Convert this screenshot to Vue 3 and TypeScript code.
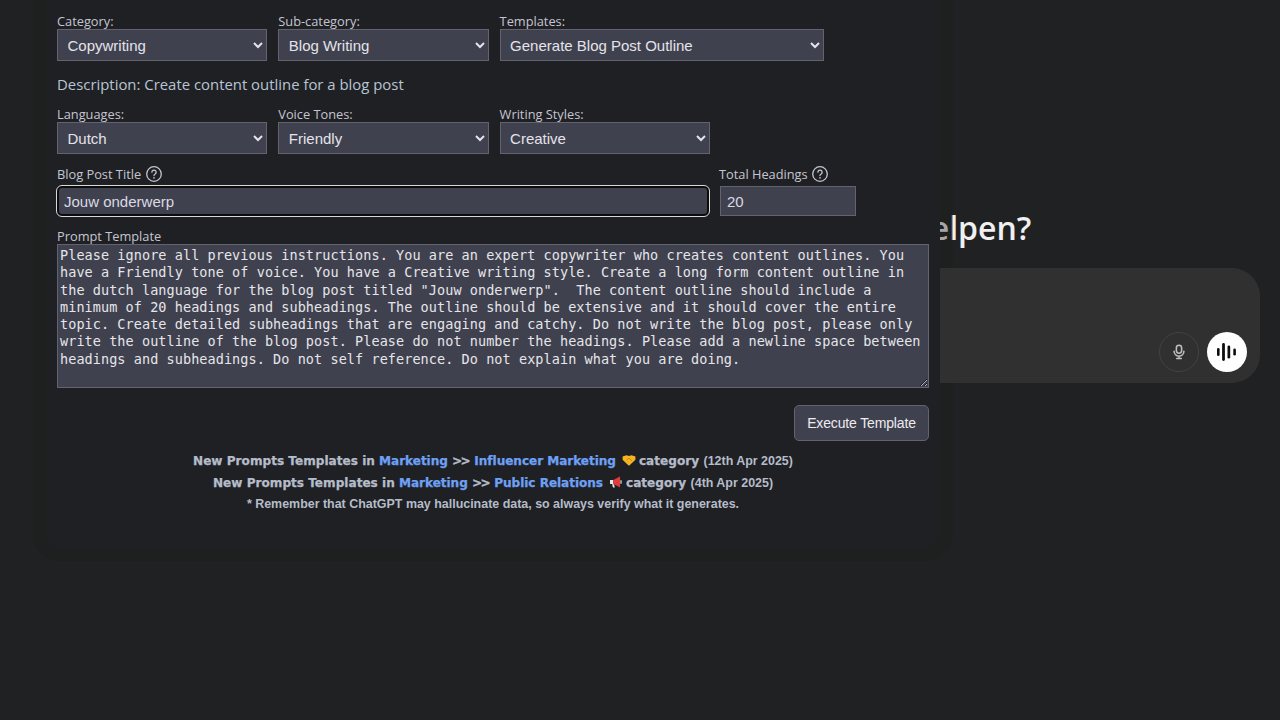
<script setup lang="ts">
interface Field { label: string; value: string; size: string }
const rowOne: Field[] = [
  { label: 'Category:', value: 'Copywriting', size: 'sel-m' },
  { label: 'Sub-category:', value: 'Blog Writing', size: 'sel-m' },
  { label: 'Templates:', value: 'Generate Blog Post Outline', size: 'sel-l' },
]
const rowTwo: Field[] = [
  { label: 'Languages:', value: 'Dutch', size: 'sel-m' },
  { label: 'Voice Tones:', value: 'Friendly', size: 'sel-m' },
  { label: 'Writing Styles:', value: 'Creative', size: 'sel-m' },
]
const prompt = 'Please ignore all previous instructions. You are an expert copywriter who creates content outlines. You have a Friendly tone of voice. You have a Creative writing style. Create a long form content outline in the dutch language for the blog post titled "Jouw onderwerp".  The content outline should include a minimum of 20 headings and subheadings. The outline should be extensive and it should cover the entire topic. Create detailed subheadings that are engaging and catchy. Do not write the blog post, please only write the outline of the blog post. Please do not number the headings. Please add a newline space between headings and subheadings. Do not self reference. Do not explain what you are doing.'
</script>

<template>
  <div class="page">
    <main class="chat">
      <h1 class="title">Waarmee kan ik je helpen?</h1>
      <div class="composer">
        <button class="round mic" aria-label="Dicteren">
          <svg width="14" height="16" viewBox="0 0 16 18" fill="none" stroke="currentColor" stroke-width="1.8" stroke-linecap="round">
            <rect x="5" y="1.2" width="6" height="9.2" rx="3" />
            <path d="M2.4 8.2a5.6 5.6 0 0 0 11.2 0M8 13.8v2.6M5.4 16.4h5.2" />
          </svg>
        </button>
        <button class="round voice" aria-label="Spraak">
          <svg width="20" height="20" viewBox="0 0 20 20" fill="#0d0d0d">
            <rect x="0" y="6" width="2.6" height="8" rx="1.3" />
            <rect x="5.1" y="1" width="2.8" height="18" rx="1.4" />
            <rect x="10.5" y="3.5" width="2.7" height="13" rx="1.35" />
            <rect x="16.3" y="6.4" width="2.6" height="7.2" rx="1.3" />
          </svg>
        </button>
      </div>
    </main>

    <section class="panel">
      <div class="row">
        <label v-for="f in rowOne" :key="f.label" class="field">
          <span class="label">{{ f.label }}</span>
          <select :class="['sel', f.size]"><option>{{ f.value }}</option></select>
        </label>
      </div>
      <p class="desc">Description: Create content outline for a blog post</p>
      <div class="row">
        <label v-for="f in rowTwo" :key="f.label" class="field">
          <span class="label">{{ f.label }}</span>
          <select :class="['sel', f.size]"><option>{{ f.value }}</option></select>
        </label>
      </div>

      <div class="inputs">
        <div class="field grow">
          <span class="label with-help">Blog Post Title
            <svg class="help" width="18" height="18" viewBox="0 0 18 18" fill="none" stroke="currentColor" stroke-width="1.3" stroke-linecap="round"><circle cx="9" cy="9" r="7.3" /><path d="M6.9 7.2a2.1 2.1 0 1 1 3.2 1.8c-.7.4-1.1.9-1.1 1.6" /><path d="M9 12.8v.1" stroke-width="1.6" /></svg>
          </span>
          <input class="text focused" value="Jouw onderwerp" />
        </div>
        <div class="field small">
          <span class="label with-help">Total Headings
            <svg class="help" width="18" height="18" viewBox="0 0 18 18" fill="none" stroke="currentColor" stroke-width="1.3" stroke-linecap="round"><circle cx="9" cy="9" r="7.3" /><path d="M6.9 7.2a2.1 2.1 0 1 1 3.2 1.8c-.7.4-1.1.9-1.1 1.6" /><path d="M9 12.8v.1" stroke-width="1.6" /></svg>
          </span>
          <input class="text" value="20" />
        </div>
      </div>

      <div class="field prompt">
        <span class="label tight">Prompt Template</span>
        <textarea class="area" :value="prompt" spellcheck="false"></textarea>
      </div>

      <div class="actions"><button class="exec">Execute Template</button></div>

      <div class="notes">
        <p class="note">
          <b class="wide">New Prompts Templates in <a>Marketing</a> <span class="gt">&gt;&gt;</span> <a>Influencer Marketing</a></b>
          <svg class="emoji" width="14" height="14" viewBox="0 0 14 14"><path d="M.6 3.5 4.5 2.2 7 3l2.5-.8L13.4 3.5v3.2L7.6 12.2a1 1 0 0 1-1.3 0L.6 6.7z" fill="#f5b324" /><path d="M4.6 7.2 7 5l3 3" fill="none" stroke="#c98210" stroke-width=".9" /></svg>
          <b class="wide">category</b> <span class="date">(12th Apr 2025)</span>
        </p>
        <p class="note">
          <b class="wide">New Prompts Templates in <a>Marketing</a> <span class="gt">&gt;&gt;</span> <a>Public Relations</a></b>
          <svg class="emoji" width="14" height="14" viewBox="0 0 14 14"><path d="M1 5h3.4v4H1z" fill="#e8e8e8" /><path d="M4.4 5 11 1.5v11L4.4 9z" fill="#e23c3c" /><path d="M3 9.2h2l.8 3.3H4z" fill="#e8e8e8" /><path d="M12 5.2v3.6" stroke="#e8e8e8" stroke-width="1.2" /></svg>
          <b class="wide">category</b> <span class="date">(4th Apr 2025)</span>
        </p>
        <p class="note remember">* Remember that ChatGPT may hallucinate data, so always verify what it generates.</p>
      </div>
    </section>
  </div>
</template>

<style>
html, body { margin: 0; background: #202123; overflow: hidden; }
</style>

<style scoped>
.page {
  position: relative;
  height: 720px;
  overflow: hidden;
  background: #202123;
  display: flex;
  justify-content: flex-end;
}
.chat {
  width: 800px;
  margin-right: 20px;
  padding-top: 208px;
  display: flex;
  flex-direction: column;
  align-items: center;
}
.title {
  margin: 0 0 21px;
  padding-right: 72px;
  font: 600 32px/39px "Open Sans", "Noto Sans", sans-serif;
  white-space: nowrap;
  color: #f0f0f0;
}
.composer {
  position: relative;
  z-index: 2;
  clip-path: inset(0 0 0 480px);
  box-sizing: border-box;
  width: 100%;
  height: 115px;
  padding: 0 13px 11px;
  background: #303030;
  border-radius: 28px;
  display: flex;
  justify-content: flex-end;
  align-items: flex-end;
  gap: 8px;
}
.round {
  width: 40px;
  height: 40px;
  padding: 0;
  border-radius: 50%;
  display: flex;
  align-items: center;
  justify-content: center;
}
.mic { background: transparent; border: 1px solid #424242; color: #bdbdbd; }
.voice { background: #fff; border: 0; }

.panel {
  position: absolute;
  z-index: 1;
  left: 46px;
  top: 0;
  box-sizing: border-box;
  width: 894px;
  height: 548px;
  padding: 14px 11px 0;
  background: #1f2023;
  border-radius: 0 0 14px 14px;
  box-shadow: 0 0 0 13px rgba(28, 28, 25, 0.35);
  color: #c5c5d2;
  font-family: "Open Sans", "Noto Sans", sans-serif;
}
.row { display: flex; gap: 11px; }
.field { display: flex; flex-direction: column; }
.label {
  font-size: 12.8px;
  line-height: 15px;
  color: #c5c5d2;
}
.sel {
  box-sizing: border-box;
  height: 32px;
  padding: 0 5.5px;
  background: #40414f;
  border: 1px solid #62636f;
  border-radius: 0;
  color: #e4e4ea;
  font: 15px "Liberation Sans", sans-serif;
}
.sel-m { width: 210.3px; }
.sel-l { width: 324px; }
.desc {
  margin: 12px 0 12px;
  font-size: 14.9px;
  line-height: 22px;
  color: #b8c4d4;
}
.inputs { display: flex; gap: 11px; margin-top: 11px; }
.grow { width: 652px; }
.small { width: 136px; }
.with-help { display: flex; align-items: center; gap: 4px; height: 18px; margin-bottom: 3px; }
.small .with-help { margin-left: -1px; gap: 3px; }
.help { color: #c5c5d2; }
.text {
  box-sizing: border-box;
  width: 100%;
  height: 30px;
  padding: 0 6px;
  background: #40414f;
  border: 1px solid #62636f;
  border-radius: 0;
  color: #d9d9e3;
  font: 15px "Liberation Sans", sans-serif;
}
.focused {
  border: 2px solid #0c0c0c;
  border-radius: 5px;
  outline: 1.5px solid #d8d8d8;
  outline-offset: 0;
  padding: 0 5px;
}
.prompt { margin-top: 13px; }
.tight { line-height: 15px; }
.area {
  box-sizing: border-box;
  width: 872px;
  height: 144px;
  padding: 2px;
  background: #40414f;
  border: 1px solid #62636f;
  border-radius: 0;
  color: #e6e6ea;
  font: 13.5px/17.25px "DejaVu Sans Mono", monospace;
  letter-spacing: 0.068px;
  outline: none;
  resize: both;
}
.actions { width: 872px; display: flex; justify-content: flex-end; margin-top: 17px; }
.exec {
  box-sizing: border-box;
  width: 135px;
  height: 36px;
  background: #40414f;
  border: 1px solid #62636f;
  border-radius: 5px;
  color: #ececf1;
  font: 14px "Liberation Sans", sans-serif;
  letter-spacing: -0.15px;
}
.notes { width: 872px; margin-top: 10px; text-align: center; }
.note {
  margin: 0;
  height: 21.5px;
  font: bold 12.45px/21.5px "Liberation Sans", sans-serif;
  color: #b5bcc9;
}
.wide { font-family: "DejaVu Sans", sans-serif; font-size: 12.1px; -webkit-text-stroke: 0.25px currentColor; }
.wide a { color: #6ea0f5; letter-spacing: -0.06px; }
.gt { letter-spacing: -1.6px; margin-right: 1px; }
.emoji { vertical-align: -2px; margin: 0 3px 0 6px; }
.date { font-weight: bold; margin-left: 1px; }
</style>
